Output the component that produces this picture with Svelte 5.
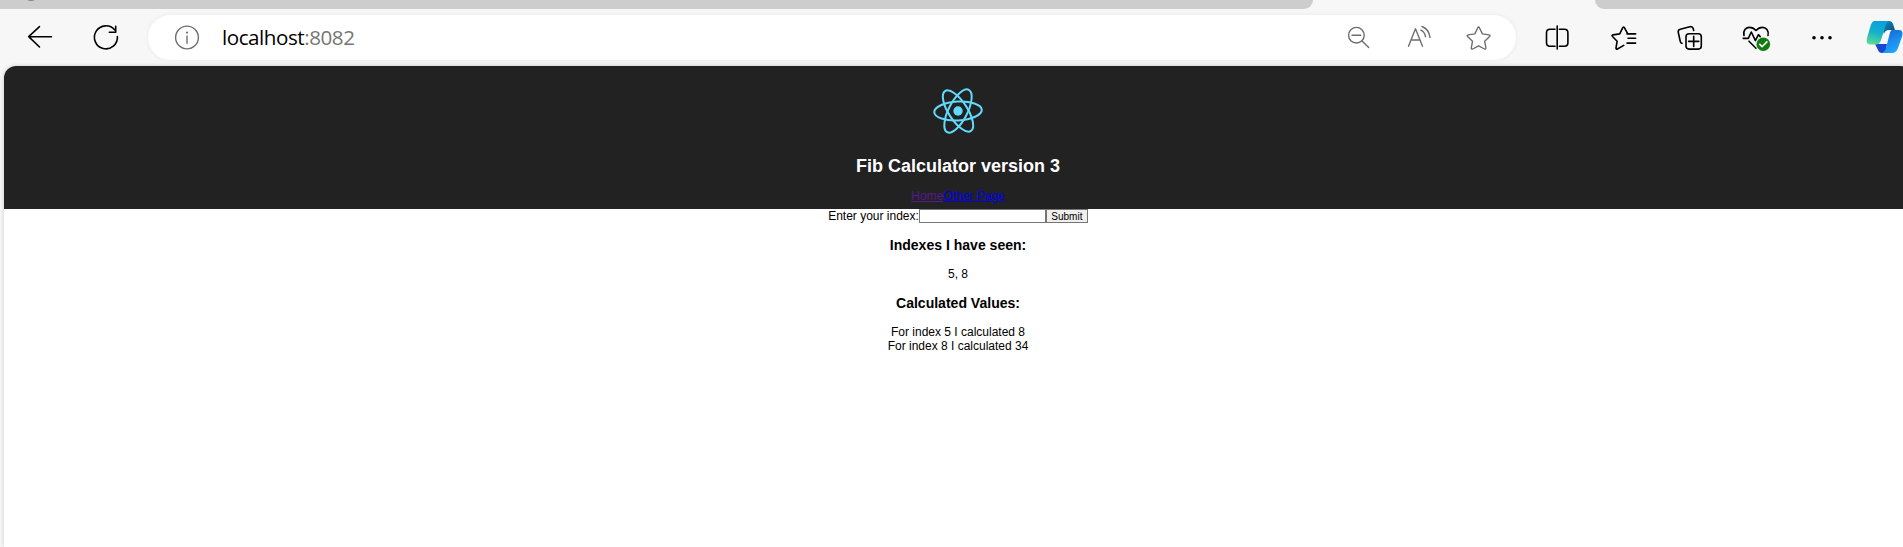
<script>
  const seenIndexes = [5, 8];
  const values = [
    { index: 5, value: 8 },
    { index: 8, value: 34 },
  ];
  const orbits = [-3, 57, 117];
  let index = $state('');
</script>

<div class="browser">
  <div class="tabs">
    <div class="tab-strip left"><span class="favicon"></span></div>
    <div class="tab-strip right"></div>
  </div>

  <div class="toolbar">
    <svg class="icon back" viewBox="0 0 40 40"><path d="M31.5 19.7H8.7M19.5 9.7 8.7 19.7l10.8 10.3" /></svg>
    <svg class="icon reload" viewBox="0 0 40 40"><path d="M31.4 19.5A11.5 11.5 0 1 1 28.8 13M29.7 9.2V15.3H23.3" /></svg>

    <div class="address">
      <svg class="icon muted" viewBox="0 0 40 40">
        <circle cx="20" cy="20.5" r="11.4" /><path d="M20 19V26.3" /><circle class="dot" cx="20" cy="15.6" r="1.1" />
      </svg>
      <div class="url">localhost<span>:8082</span></div>
      <svg class="icon muted zoom" viewBox="0 0 40 40"><circle cx="18.4" cy="18.2" r="7.8" /><path d="m24 24 6.7 6.4M14 18.2h8.7" /></svg>
      <svg class="icon muted read" viewBox="0 0 40 40">
        <path d="m8.5 29.2 7-17.4 7 17.4M11 23h9M22 9.5c4.3 1.7 7.5 6.2 8 11M20.8 13.2c2.5 1 4.3 3.5 4.7 6.5" />
      </svg>
      <svg class="icon muted star" viewBox="0 0 40 40">
        <path transform="translate(.6 .3)" d="M19.2 10.4q.8-1.4 1.6 0l3 6.2 6.7 1q1.6.4.5 1.6l-4.9 4.8 1.2 6.7q0 1.6-1.4 1L20 28.5l-5.9 3.2q-1.5.6-1.4-1l1.2-6.7L9 19.2q-1.1-1.2.5-1.6l6.7-1Z" />
      </svg>
    </div>

    <svg class="icon split" viewBox="0 0 40 40"><path d="M18 12.2h-5q-3.5 0-3.5 3.5v10q0 3.5 3.5 3.5h5M22.4 12.2h5q3.5 0 3.5 3.5v10q0 3.5-3.5 3.5h-5M20.2 9v23" /></svg>
    <svg class="icon" viewBox="0 0 40 40">
      <path transform="translate(.6 .3)" d="m24 16.3-3.2-6q-.8-1.2-1.6 0l-3.1 6.3-6.7 1q-1.6.4-.5 1.6l4.6 4.8-1.1 6.7q0 1.6 1.4 1l6.4-3.6M23.4 16.6H32M24.4 21H32M23.4 25.8H32" />
    </svg>
    <svg class="icon" viewBox="0 0 40 40">
      <path d="m12 26.3-.7-.3q-.7-.4-1-1.5L8.3 15.5q-.6-2.6 2-3.3l9.5-2.5q2.7-.6 3.4 1.8l.5 2" />
      <rect x="16" y="16.8" width="15.3" height="15.3" rx="3" /><path d="M23.7 19.3v10.2M18.6 24.4h10.2" />
    </svg>
    <svg class="icon" viewBox="0 0 40 40">
      <path d="M8 18.5C6.8 13 10 10.4 13.5 10.4c3 0 5 1.5 6.5 3.1 1.5-1.6 3.5-3.1 6.5-3.1 4 0 6.5 3.6 5.5 8M7.2 21.4h5.1l3-6.4 4.1 8.6 3-6 1.8 2M13 24.2l7 7" />
      <circle class="badge" cx="27.3" cy="27.2" r="6.8" /><path class="check" d="m23.8 27.4 2.3 2.3 4.8-4.8" />
    </svg>
    <svg class="icon dots" viewBox="0 0 40 40"><g class="dot"><circle cx="11" cy="20.7" r="1.8" /><circle cx="19" cy="20.7" r="1.8" /><circle cx="27" cy="20.7" r="1.8" /></g></svg>
    <svg class="copilot" viewBox="0 0 38 34">
      <defs>
        <linearGradient id="teal" x1=".5" y1="0" x2=".25" y2="1"><stop offset="0" stop-color="#0ba0dd" /><stop offset=".5" stop-color="#13b2c8" /><stop offset="1" stop-color="#5fdc90" /></linearGradient>
        <linearGradient id="blue" x1=".3" y1="0" x2=".7" y2="1"><stop offset="0" stop-color="#1767d3" /><stop offset=".5" stop-color="#1b8cee" /><stop offset="1" stop-color="#1fa9fa" /></linearGradient>
        <linearGradient id="fold" x1="0" y1="0" x2="1" y2="1"><stop offset="0" stop-color="#0a91cb" /><stop offset="1" stop-color="#124b73" /></linearGradient>
      </defs>
      <path fill="url(#fold)" d="M14 1h9q3 0 4 3l2 6h-6q-4 0-5 4Z" />
      <path fill="#1947d1" d="M9 24h12l-1 6q-1 3-4 3-3 0-4-3Z" />
      <path fill="url(#teal)" d="M9 1h15q-3 0-4.5 5L15 20q-1.5 4.5-5 4.5H4Q-.5 24.5 1 18L4.5 6Q6 1 9 1Z" />
      <path fill="url(#blue)" d="M26 10h7q4.5 0 3.2 6L32 28q-1.8 5-6 5H15q3.5 0 5-5l3.5-13.5Q24.5 10 26 10Z" />
    </svg>
  </div>

  <div class="page">
    <header>
      <svg class="logo" viewBox="-30 -30 60 60">
        {#each orbits as angle}
          <ellipse rx="23.8" ry="9.4" transform="rotate({angle})" />
        {/each}
        <circle r="4.7" />
      </svg>
      <h1>Fib Calculator version 3</h1>
      <nav><a class="visited" href="#home">Home</a><a href="#other">Other Page</a></nav>
    </header>
    <main>
      <form onsubmit={(e) => e.preventDefault()}>
        <label for="index">Enter your index:</label><input id="index" bind:value={index} /><button>Submit</button>
      </form>
      <h3>Indexes I have seen:</h3>
      <div>{seenIndexes.join(', ')}</div>
      <h3>Calculated Values:</h3>
      {#each values as item}
        <div>For index {item.index} I calculated {item.value}</div>
      {/each}
    </main>
  </div>
</div>

<style>
  :global(body) { margin: 0; overflow: hidden; }
  .browser { width: 1903px; height: 547px; overflow: hidden; background: #f7f7f7; display: flex; flex-direction: column; }
  .tabs { display: flex; justify-content: space-between; height: 9px; flex: none; }
  .tab-strip { background: #cdcdcd; overflow: hidden; }
  .left { width: 1313px; border-bottom-right-radius: 9px; }
  .right { width: 308px; border-bottom-left-radius: 9px; }
  .favicon { display: block; width: 14px; height: 14px; margin: -13px 0 0 24px; border-radius: 50%; background: #858585; }
  .toolbar { display: flex; align-items: center; height: 57px; flex: none; box-sizing: border-box; padding-bottom: 1px; }
  .icon { width: 40px; height: 40px; flex: none; margin-right: 26.4px; fill: none; stroke: #000; stroke-width: 1.6; stroke-linecap: round; stroke-linejoin: round; }
  .back { margin-left: 20px; margin-right: 26px; }
  .reload { margin-right: 22px; }
  .address { width: 1368px; height: 45px; flex: none; display: flex; align-items: center; background: #fff; border-radius: 23px; box-shadow: 0 0 5px #0000000f; margin-right: 21px; }
  .address .icon { margin: 0; }
  .address .icon:first-child { margin-left: 19px; }
  .address .muted { stroke: #6e6e6e; stroke-width: 1.4; }
  .url { flex: 1; margin-left: 15px; font: 20.6px/30px "Open Sans", sans-serif; letter-spacing: -0.45px; color: #000; }
  .url span { color: #767676; }
  .address .read { margin-left: 22px; }
  .address .star { margin-left: 18px; margin-right: 18px; }
  .dot { fill: #000; stroke: none; }
  .muted .dot { fill: #6e6e6e; }
  .badge { fill: #107c10; stroke: none; }
  .check { stroke: #fff; }
  .copilot { width: 38px; height: 34px; flex: none; margin-left: -3px; }
  .page { width: 1908px; flex: 1; box-sizing: border-box; margin-left: 4px; overflow: hidden; background: #fff; border-radius: 12px 12px 0 0; box-shadow: 0 0 4px #00000030; font: 12px/14px "Liberation Sans", Arial, sans-serif; color: #000; text-align: center; }
  header { height: 143px; box-sizing: border-box; padding-top: 15px; background: #222; color: #fff; }
  .logo { display: block; width: 60px; height: 60px; margin: 0 auto; fill: none; stroke: #61dafb; stroke-width: 2; }
  .logo circle { fill: #61dafb; stroke: none; }
  h1 { margin: 15px 0 13px; font-size: 18px; line-height: 20px; }
  a { color: #0000ee; }
  .visited { color: #551a8b; }
  form { display: flex; justify-content: center; height: 14px; }
  input { width: 127px; height: 14px; box-sizing: border-box; border: 1px solid #767676; padding: 0; border-radius: 0; font: 10px "Liberation Sans", sans-serif; }
  button { width: 42px; height: 14px; box-sizing: border-box; padding: 0; border: 1px solid #767676; border-radius: 0; background: #efefef; color: #000; font: 10px/13px "Liberation Sans", sans-serif; }
  h3 { margin: 14px 0; font-size: 14.04px; line-height: 16px; }
</style>
